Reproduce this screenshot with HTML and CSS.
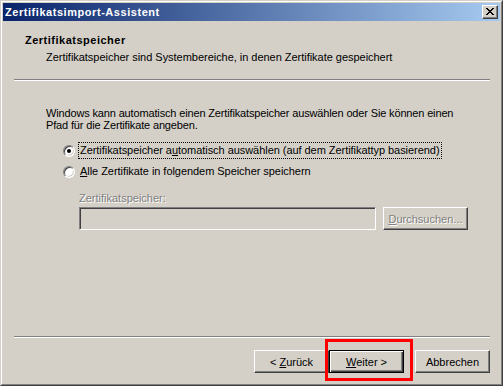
FILE: index.html
```html
<!DOCTYPE html>
<html lang="de">
<head>
    <meta charset="UTF-8">
    <title>Zertifikatsimport-Assistent</title>
    <link rel="stylesheet" href="styles.css">
</head>
<body>

<div class="window">
    <div class="frame">
        <!-- Title bar -->
        <div class="titlebar">
            <span class="title">Zertifikatsimport-Assistent</span>
            <button class="btn close" type="button">
                <svg width="8" height="7" viewBox="0 0 8 7" shape-rendering="crispEdges">
                    <path d="M0 0h2v1h-2zM6 0h2v1h-2zM1 1h2v1h-2zM5 1h2v1h-2zM2 2h4v1h-4zM3 3h2v1h-2zM2 4h4v1h-4zM1 5h2v1h-2zM5 5h2v1h-2zM0 6h2v1h-2zM6 6h2v1h-2z" fill="#000"/>
                </svg>
            </button>
        </div>

        <div class="dialog">
            <!-- Wizard header -->
            <div class="header">
                <div class="header-title">Zertifikatspeicher</div>
                <div class="header-sub">Zertifikatspeicher sind Systembereiche, in denen Zertifikate gespeichert</div>
            </div>
            <div class="separator"></div>

            <!-- Page content -->
            <div class="content">
                <p class="intro">Windows kann automatisch einen Zertifikatspeicher auswählen oder Sie können einen<br>Pfad für die Zertifikate angeben.</p>

                <div class="options">
                    <div class="option">
                        <span class="radio checked"></span>
                        <span class="option-text focused">Zertifikatspeicher a<u>u</u>tomatisch auswählen (auf dem Zertifikattyp basierend)</span>
                    </div>
                    <div class="option">
                        <span class="radio"></span>
                        <span class="option-text"><u>A</u>lle Zertifikate in folgendem Speicher speichern</span>
                    </div>
                </div>

                <div class="store">
                    <div class="store-label">Zertifikatspeicher:</div>
                    <div class="store-row">
                        <div class="edit"></div>
                        <button class="btn browse" type="button" disabled><u>D</u>urchsuchen...</button>
                    </div>
                </div>
            </div>

            <!-- Footer buttons -->
            <div class="footer">
                <div class="separator"></div>
                <div class="buttons">
                    <button class="btn" type="button">&lt; <u>Z</u>urück</button>
                    <button class="btn default" type="button"><u>W</u>eiter &gt;<span class="highlight"></span></button>
                    <button class="btn cancel" type="button">Abbrechen</button>
                </div>
            </div>
        </div>
    </div>
</div>

</body>
</html>
```

FILE: styles.css
```css
body {
    margin: 0;
    font-family: "Liberation Sans", Arial, sans-serif;
    font-size: 11px;
    color: #000;
    background-color: #d4d0c8;
}
.window {
    width: 503px;
    height: 386px;
    box-sizing: border-box;
    border: 1px solid;
    border-color: #d4d0c8 #404040 #404040 #d4d0c8;
}
.frame {
    height: 100%;
    box-sizing: border-box;
    border: 1px solid;
    border-color: #fff #808080 #808080 #fff;
    padding: 1px;
    display: flex;
    flex-direction: column;
    background-color: #d4d0c8;
}
.titlebar {
    height: 18px;
    flex-shrink: 0;
    display: flex;
    align-items: center;
    justify-content: space-between;
    padding: 0 2px;
    background: linear-gradient(to right, #0a246a, #a6caf0);
}
.title {
    color: #fff;
    font-weight: bold;
    letter-spacing: 0.55px;
}
.btn {
    font: inherit;
    color: #000;
    background-color: #d4d0c8;
    border: 1px solid;
    border-color: #fff #404040 #404040 #fff;
    box-shadow: inset -1px -1px #808080;
    padding: 0;
    margin: 0;
    width: 75px;
    height: 23px;
    position: relative;
}
.btn.close {
    width: 16px;
    height: 14px;
    display: flex;
    align-items: center;
    justify-content: center;
    padding: 0 1px 1px 0;
}
.btn.default {
    border-color: #000;
    box-shadow: inset 1px 1px #fff, inset -1px -1px #404040, inset -2px -2px #808080;
}
.btn:disabled {
    color: #808080;
    text-shadow: 1px 1px #fff;
}
.dialog {
    flex: 1;
    display: flex;
    flex-direction: column;
}
.header {
    height: 58px;
    box-sizing: border-box;
    padding: 13px 0 0 22px;
    line-height: 13px;
}
.header-title {
    font-weight: bold;
    letter-spacing: 0.5px;
}
.header-sub {
    margin-top: 4px;
    padding-left: 21px;
    letter-spacing: -0.03px;
}
.separator {
    margin: 0 10px 0 11px;
    border-top: 1px solid #808080;
    border-bottom: 1px solid #fff;
    height: 0;
}
.content {
    flex: 1;
    padding: 26px 0 0 43px;
}
.intro {
    margin: 0;
    line-height: 12px;
    letter-spacing: -0.15px;
}
.options {
    margin: 11px 0 0 17px;
    display: flex;
    flex-direction: column;
    gap: 4px;
}
.option {
    display: flex;
    align-items: center;
    gap: 3px;
    height: 17px;
}
.radio {
    width: 12px;
    height: 12px;
    box-sizing: border-box;
    border-radius: 50%;
    border: 1px solid;
    border-color: #808080 #fff #fff #808080;
    box-shadow: inset 1px 1px #404040, inset -1px -1px #d4d0c8;
    background-color: #fff;
    position: relative;
}
.radio.checked::after {
    content: "";
    position: absolute;
    left: 3px;
    top: 3px;
    width: 4px;
    height: 4px;
    border-radius: 50%;
    background-color: #000;
}
.option-text {
    line-height: 13px;
    padding: 1px;
    border: 1px solid transparent;
    letter-spacing: -0.05px;
}
.option-text.focused {
    border: 1px dotted #000;
}
.store {
    margin: 12px 0 0 33px;
}
.store-label {
    line-height: 13px;
    color: #808080;
    text-shadow: 1px 1px #fff;
}
.store-row {
    margin-top: 2px;
    display: flex;
    gap: 7px;
}
.edit {
    width: 297px;
    height: 23px;
    box-sizing: border-box;
    border: 1px solid;
    border-color: #808080 #fff #fff #808080;
    box-shadow: inset 1px 1px #404040, inset -1px -1px #d4d0c8;
}
.btn.browse {
    width: 85px;
}
.footer {
    padding-bottom: 10px;
}
.buttons {
    margin-top: 12px;
    padding-right: 10px;
    display: flex;
    justify-content: flex-end;
}
.btn.cancel {
    margin-left: 11px;
}
.highlight {
    position: absolute;
    left: -5px;
    top: -12px;
    right: -10px;
    bottom: -9px;
    border: 3px solid #ff0000;
    pointer-events: none;
}
```
